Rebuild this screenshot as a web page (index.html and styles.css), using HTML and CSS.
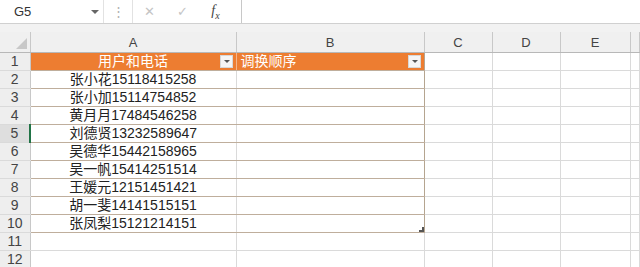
FILE: index.html
```html
<!DOCTYPE html>
<html lang="zh">
<head>
    <meta charset="UTF-8">
    <title>表格</title>
    <link rel="stylesheet" href="styles.css">
</head>
<body>

    <div class="formula-bar">
        <div class="name-box">G5<span class="nb-arrow"></span></div>
        <div class="dots">⋮</div>
        <div class="fx-btns">
            <span class="fb-x">✕</span>
            <span class="fb-ok">✓</span>
            <span class="fb-fx"><i>f</i><sub>x</sub></span>
        </div>
        <div class="fx-input"></div>
    </div>
    <div class="gap"></div>

    <table class="sheet">
        <colgroup>
            <col class="c-rh"><col class="c-a"><col class="c-b"><col class="c-c"><col class="c-d"><col class="c-e"><col>
        </colgroup>
        <tr class="col-heads">
            <th class="corner"><span class="tri"></span></th>
            <th>A</th><th>B</th><th>C</th><th>D</th><th>E</th><th></th>
        </tr>
        <tr class="hdr">
            <td class="rh">1</td>
            <td class="t-a">用户和电话<span class="filter"></span></td>
            <td class="t-b">调换顺序<span class="filter"></span></td>
            <td></td><td></td><td></td><td></td>
        </tr>
        <tr class="data"><td class="rh">2</td><td class="t-a">张小花15118415258</td><td class="t-b"></td><td></td><td></td><td></td><td></td></tr>
        <tr class="data"><td class="rh">3</td><td class="t-a">张小加15114754852</td><td class="t-b"></td><td></td><td></td><td></td><td></td></tr>
        <tr class="data"><td class="rh">4</td><td class="t-a">黄月月17484546258</td><td class="t-b"></td><td></td><td></td><td></td><td></td></tr>
        <tr class="data"><td class="rh sel">5</td><td class="t-a">刘德贤13232589647</td><td class="t-b"></td><td></td><td></td><td></td><td></td></tr>
        <tr class="data"><td class="rh">6</td><td class="t-a">吴德华15442158965</td><td class="t-b"></td><td></td><td></td><td></td><td></td></tr>
        <tr class="data"><td class="rh">7</td><td class="t-a">吴一帆15414251514</td><td class="t-b"></td><td></td><td></td><td></td><td></td></tr>
        <tr class="data"><td class="rh">8</td><td class="t-a">王媛元12151451421</td><td class="t-b"></td><td></td><td></td><td></td><td></td></tr>
        <tr class="data"><td class="rh">9</td><td class="t-a">胡一斐14141515151</td><td class="t-b"></td><td></td><td></td><td></td><td></td></tr>
        <tr class="data last"><td class="rh">10</td><td class="t-a">张凤梨15121214151</td><td class="t-b"><span class="handle"></span></td><td></td><td></td><td></td><td></td></tr>
        <tr><td class="rh">11</td><td></td><td></td><td></td><td></td><td></td><td></td></tr>
        <tr><td class="rh">12</td><td></td><td></td><td></td><td></td><td></td><td></td></tr>
    </table>

</body>
</html>
```

FILE: styles.css
```css
body {
    margin: 0;
    background: #fff;
    font-family: "Liberation Sans", "Noto Sans CJK SC", sans-serif;
    color: #222;
    overflow: hidden;
}
.formula-bar {
    display: flex;
    height: 23px;
    border-bottom: 1px solid #d0d0d0;
    background: #fff;
}
.name-box {
    position: relative;
    width: 89px;
    padding-left: 14px;
    font-size: 13px;
    line-height: 23px;
    color: #333;
    border-right: 1px solid #e2e2e2;
}
.nb-arrow {
    position: absolute;
    right: 4px;
    top: 10px;
    border-left: 4px solid transparent;
    border-right: 4px solid transparent;
    border-top: 4px solid #666;
}
.dots {
    width: 28px;
    text-align: center;
    color: #b0b0b0;
    font-size: 13px;
    line-height: 23px;
    border-right: 1px solid #e2e2e2;
}
.fx-btns {
    display: flex;
    width: 99px;
    padding-right: 9px;
    align-items: center;
    font-family: "DejaVu Sans", sans-serif;
}
.fx-btns span {
    width: 33px;
    text-align: center;
}
.fb-x, .fb-ok {
    color: #c4c4c4;
    font-size: 13px;
}
.fx-btns .fb-fx {
    font-family: "Liberation Serif", serif;
    font-size: 14px;
    color: #444;
}
.fb-fx sub {
    font-size: 10px;
    font-style: italic;
}
.fx-input {
    flex: 1;
    border-left: 1px solid #c8c8c8;
}
.gap {
    height: 8px;
    background: #f2f2f2;
}
.sheet {
    border-collapse: collapse;
    table-layout: fixed;
    width: 100%;
}
.c-rh { width: 30px; }
.c-a { width: 206px; }
.c-b { width: 188px; }
.c-c { width: 68px; }
.c-d { width: 68px; }
.c-e { width: 70px; }
.sheet th, .sheet td {
    height: 17px;
    padding: 0;
    border-right: 1px solid #dadada;
    border-bottom: 1px solid #dadada;
    font-size: 14px;
    line-height: 17px;
    white-space: nowrap;
    overflow: hidden;
}
.col-heads th {
    height: 17px;
    background: #f0f0f0;
    font-weight: normal;
    font-size: 13px;
    line-height: 19px;
    color: #444;
    border-right: 1px solid #c8c8c8;
    border-bottom: 1px solid #b8b8b8;
    border-top: 1px solid #f0f0f0;
}
.corner {
    position: relative;
}
.tri {
    position: absolute;
    right: 3px;
    bottom: 3px;
    border-left: 11px solid transparent;
    border-bottom: 11px solid #c8c8c8;
}
.rh {
    background: #eeeeee;
    text-align: center;
    color: #444;
    border-right: 1px solid #c8c8c8 !important;
    border-bottom: 1px solid #dcdcdc;
}
.rh.sel {
    background: #dedede;
    border-right: 2px solid #217346 !important;
}
.hdr td.t-a, .hdr td.t-b {
    position: relative;
    background: #ed7d31;
    color: #fff;
    border-right: 1px solid #f5b58a;
    border-bottom: 1px solid #bfae9c;
}
.hdr .t-a {
    text-align: center;
}
.hdr .t-b {
    padding-left: 4px;
    border-right: 1px solid #b5a590 !important;
}
.filter {
    position: absolute;
    right: 3px;
    top: 2px;
    width: 11px;
    height: 11px;
    background: #f5f5f5;
    border: 1px solid #d8d8d8;
}
.filter::after {
    content: "";
    position: absolute;
    left: 3px;
    top: 4px;
    border-left: 3px solid transparent;
    border-right: 3px solid transparent;
    border-top: 3px solid #555;
}
.data .t-a {
    text-align: center;
    color: #222;
    border-bottom: 1px solid #bfae9c;
}
.data .t-b {
    position: relative;
    border-bottom: 1px solid #bfae9c;
    border-right: 1px solid #b5a590;
}
.handle {
    position: absolute;
    right: 0;
    bottom: 0;
    width: 3px;
    height: 3px;
    border-right: 2px solid #555;
    border-bottom: 2px solid #555;
}
```
